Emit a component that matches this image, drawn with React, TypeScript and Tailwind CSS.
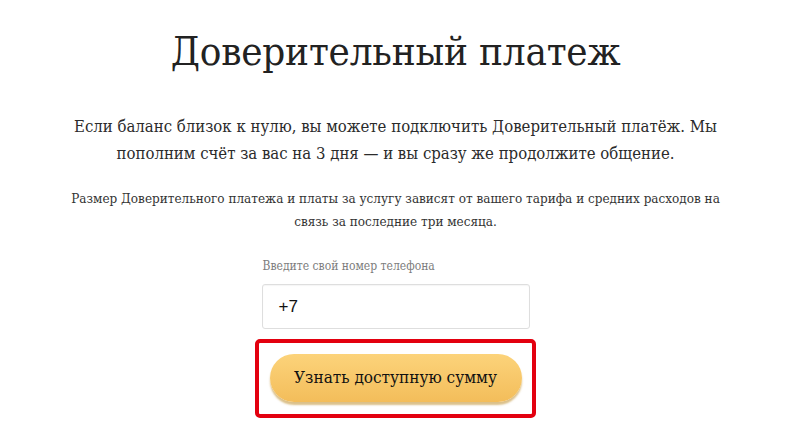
export default function App() {
  return (
    <div className="w-[791px] h-[438px] bg-white flex flex-col items-center font-['DejaVu_Serif_Condensed','DejaVu_Serif',serif] text-[#222]">
      <h1 className="mt-[24px] text-[40px] leading-[54px] text-[#222] tracking-[-0.2px]">Доверительный платеж</h1>
      <p className="mt-[35px] text-center text-[16.6px] leading-[27px] text-[#2b2b2b] whitespace-nowrap">
        Если баланс близок к нулю, вы можете подключить Доверительный платёж. Мы
        <br />
        пополним счёт за вас на 3 дня — и вы сразу же продолжите общение.
      </p>
      <p className="mt-[20px] text-center text-[13.4px] leading-[23px] text-[#333] whitespace-nowrap">
        Размер Доверительного платежа и платы за услугу зависят от вашего тарифа и средних расходов на
        <br />
        связь за последние три месяца.
      </p>
      <div className="mt-[25px] w-[268px] flex flex-col">
        <label className="text-[12px] leading-[16px] text-[#7d7d7d] pl-[1px]">Введите свой номер телефона</label>
        <div className="mt-[10px] h-[45px] border border-[#dedede] rounded-[3px] flex items-center pl-[16px] shadow-[inset_0_1px_1px_rgba(0,0,0,0.04)]">
          <span className="font-['Liberation_Sans',sans-serif] text-[17px] text-[#111]">+7</span>
        </div>
      </div>
      <div className="mt-[10px] w-[281px] h-[79px] border-[4px] border-[#e3000f] rounded-[5px] flex items-center justify-center">
        <button className="w-[252px] h-[48px] -mt-[2px] rounded-full bg-gradient-to-b from-[#fcd37a] to-[#f3bd5a] shadow-[0_3px_2px_rgba(190,140,40,0.55)] text-[17px] text-[#111]">
          Узнать доступную сумму
        </button>
      </div>
    </div>
  );
}
